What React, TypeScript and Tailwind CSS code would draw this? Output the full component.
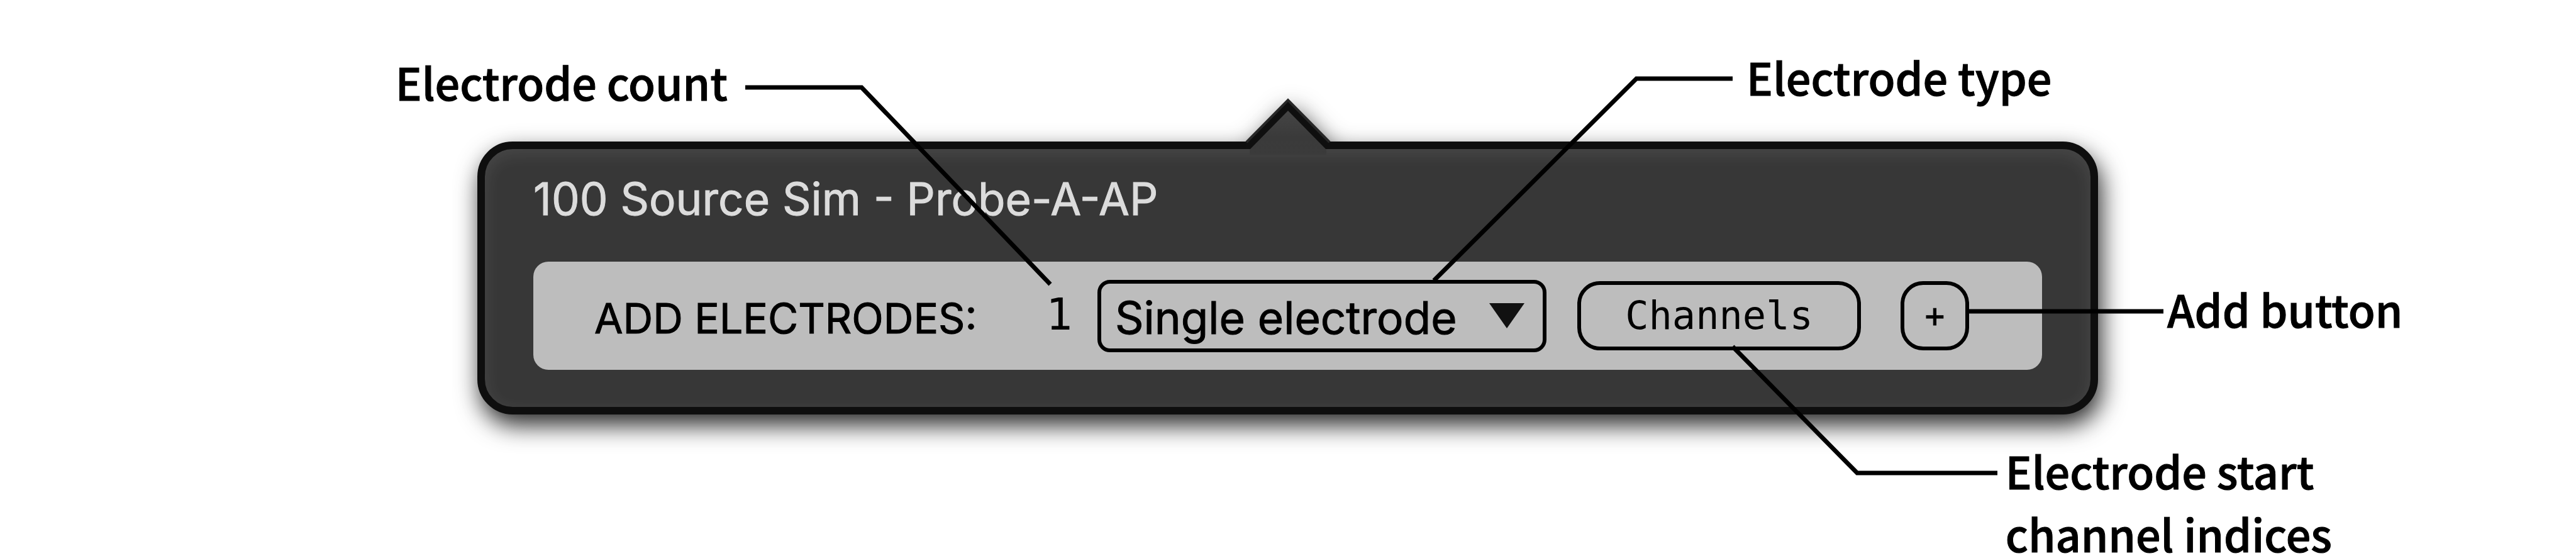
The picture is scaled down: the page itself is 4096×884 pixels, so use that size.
import React from "react";

type CalloutProps = { className?: string; children: React.ReactNode };

function Callout({ className = "", children }: CalloutProps) {
  return (
    <p
      className={`font-['Noto_Sans_CJK_SC',sans-serif] text-[70px] leading-[100px] font-medium whitespace-nowrap text-black [-webkit-text-stroke:1px_#000] ${className}`}
    >
      {children}
    </p>
  );
}

function Pointer() {
  return (
    <svg
      className="absolute -top-[75px] left-1/2 h-[96px] w-[160px] -translate-x-1/2"
      viewBox="0 0 160 96"
      aria-hidden="true"
    >
      <defs>
        <linearGradient id="pointer-fill" x1="0" y1="0" x2="0" y2="1">
          <stop offset="0" stopColor="#454545" />
          <stop offset="0.6" stopColor="#3a3a3a" />
          <stop offset="1" stopColor="#3b3b3b" />
        </linearGradient>
      </defs>
      <path d="M13 76 L80 8 L147 76 V87 H13 Z" fill="#0f0f0f" />
      <path d="M14 76 L80 9 L146 76" fill="none" stroke="#272727" strokeWidth="4" />
      <path d="M19 88 L80 26 L141 88 V96 H19 Z" fill="url(#pointer-fill)" />
    </svg>
  );
}

function Leaders() {
  return (
    <svg
      className="pointer-events-none absolute top-0 left-0 w-full"
      viewBox="0 0 4096 884"
      fill="none"
      stroke="#000"
      strokeWidth="7"
      aria-hidden="true"
    >
      <path d="M1185 139 H1370 L1670 452" />
      <path d="M2755 125 H2602 L2280 446" />
      <path d="M2755 551 L2953 752 H3176" />
      <path d="M3130 495 H3440" />
    </svg>
  );
}

export default function App() {
  return (
    <main className="relative min-h-screen overflow-hidden bg-white">
      <header className="flex h-[225px] items-start pt-[72px] pr-[20.35%] pl-[15.35%]">
        <Callout className="pt-[8px]">Electrode count</Callout>
        <Callout className="ml-auto">Electrode type</Callout>
      </header>

      <div className="grid grid-cols-[759fr_2577fr_760fr] items-center">
        <section className="relative col-start-2 drop-shadow-[5px_17px_19px_rgba(0,0,0,0.84)]">
          <div className="rounded-[56px] border-[12px] border-[#0e0e0e] bg-[#373737] px-[77px] pt-[34px] pb-[59px] font-['Inter',sans-serif] shadow-[inset_0_8px_28px_rgba(255,255,255,0.09)]">
            <h1 className="mb-[55px] text-[71px] leading-[90px] text-[#dcdcdc] [-webkit-text-stroke:1px_#dcdcdc]">
              100 Source Sim - Probe-A-AP
            </h1>
            <form
              className="flex h-[172px] items-center rounded-[24px] bg-[#bdbdbd] pr-[116px] pl-[97px] text-black"
              onSubmit={(e) => e.preventDefault()}
            >
              <label
                htmlFor="count"
                className="flex-1 pt-[8px] text-[66px] leading-[90px] [-webkit-text-stroke:1px_#000]"
              >
                ADD ELECTRODES:
              </label>
              <input
                id="count"
                defaultValue="1"
                className="w-[82px] bg-transparent pb-[4px] font-['DejaVu_Sans_Mono',monospace] text-[70px] leading-[90px]"
              />
              <div className="grid items-center">
                <select
                  aria-label="Electrode type"
                  className="col-start-1 row-start-1 h-[115px] w-[714px] appearance-none rounded-[20px] border-[6px] border-black bg-transparent pt-[4px] pl-[22px] text-[71px] leading-[100px] [-webkit-text-stroke:1px_#000]"
                >
                  <option>Single electrode</option>
                </select>
                <svg
                  className="pointer-events-none col-start-1 row-start-1 mr-[35px] h-[40px] w-[56px] justify-self-end"
                  viewBox="0 0 56 40"
                  aria-hidden="true"
                >
                  <path d="M0 0 H56 L28 40 Z" fill="#111" />
                </svg>
              </div>
              <button
                type="button"
                className="ml-[49px] h-[110px] w-[451px] rounded-[36px] border-[6px] border-black font-['DejaVu_Sans_Mono',monospace] text-[62px] leading-[80px]"
              >
                Channels
              </button>
              <button
                type="button"
                aria-label="Add"
                className="ml-[63px] h-[110px] w-[109px] rounded-[36px] border-[6px] border-black font-['DejaVu_Sans_Mono',monospace] text-[52px] leading-[80px] [-webkit-text-stroke:1px_#000]"
              >
                +
              </button>
            </form>
          </div>
          <Pointer />
        </section>
        <Callout className="pt-[98px] pl-[110px]">Add button</Callout>
      </div>

      <footer className="pt-[39px] pl-[77.85%]">
        <Callout>
          Electrode start
          <br />
          channel indices
        </Callout>
      </footer>
      <Leaders />
    </main>
  );
}
